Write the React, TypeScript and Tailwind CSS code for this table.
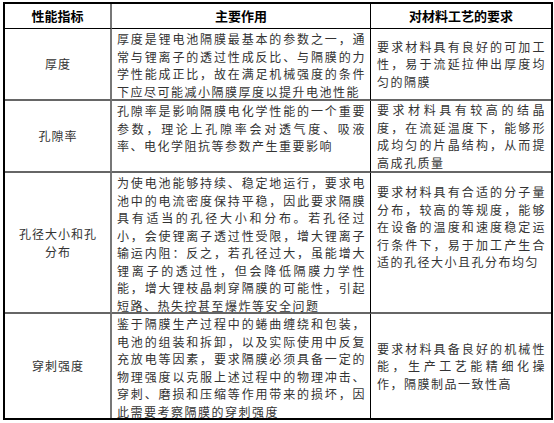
import React from 'react'

type Row = {
  name: string[]
  effect: string[]
  req: string[]
  h: string
  reqAlign: 'center' | 'top'
}

const rows: Row[] = [
  {
    name: ['厚度'],
    effect: [
      '厚度是锂电池隔膜最基本的参数之一，通',
      '常与锂离子的透过性成反比、与隔膜的力',
      '学性能成正比，故在满足机械强度的条件',
      '下应尽可能减小隔膜厚度以提升电池性能',
    ],
    req: ['要求材料具有良好的可加工', '性，易于流延拉伸出厚度均', '匀的隔膜'],
    h: 'h-[72px]',
    reqAlign: 'center',
  },
  {
    name: ['孔隙率'],
    effect: [
      '孔隙率是影响隔膜电化学性能的一个重要',
      '参数，理论上孔隙率会对透气度、吸液',
      '率、电化学阻抗等参数产生重要影响',
    ],
    req: ['要求材料具有较高的结晶', '度，在流延温度下，能够形', '成均匀的片晶结构，从而提', '高成孔质量'],
    h: 'h-[72px]',
    reqAlign: 'center',
  },
  {
    name: ['孔径大小和孔', '分布'],
    effect: [
      '为使电池能够持续、稳定地运行，要求电',
      '池中的电流密度保持平稳，因此要求隔膜',
      '具有适当的孔径大小和分布。若孔径过',
      '小，会使锂离子透过性受限，增大锂离子',
      '输运内阻：反之，若孔径过大，虽能增大',
      '锂离子的透过性，但会降低隔膜力学性',
      '能，增大锂枝晶刺穿隔膜的可能性，引起',
      '短路、热失控甚至爆炸等安全问题',
    ],
    req: [
      '要求材料具有合适的分子量',
      '分布，较高的等规度，能够',
      '在设备的温度和速度稳定运',
      '行条件下，易于加工产生合',
      '适的孔径大小且孔分布均匀',
    ],
    h: 'h-[141px]',
    reqAlign: 'top',
  },
  {
    name: ['穿刺强度'],
    effect: [
      '鉴于隔膜生产过程中的蜷曲缠绕和包装，',
      '电池的组装和拆卸，以及实际使用中反复',
      '充放电等因素，要求隔膜必须具备一定的',
      '物理强度以克服上述过程中的物理冲击、',
      '穿刺、磨损和压缩等作用带来的损坏，因',
      '此需要考察隔膜的穿刺强度',
    ],
    req: ['要求材料具备良好的机械性', '能，生产工艺能精细化操', '作，隔膜制品一致性高'],
    h: 'h-[104px]',
    reqAlign: 'center',
  },
]

function Lines({ lines }: { lines: string[] }) {
  return (
    <>
      {lines.map((l, i) => (
        <div
          key={i}
          className={`h-[17.5px] whitespace-nowrap leading-[17.5px] ${
            i < lines.length - 1 ? 'text-justify [text-align-last:justify]' : 'text-left'
          }`}
        >
          {l}
        </div>
      ))}
    </>
  )
}

export default function App() {
  return (
    <div className="h-[423px] w-[554px] bg-white pl-[3px] pt-[2px] font-['Noto_Sans_CJK_SC',sans-serif] text-[12px] leading-[17.5px] tracking-[1.5px] text-[#333]">
      <div className="grid w-[550px] grid-cols-[107px_259px_180px] border-2 border-black">
        {/* Header */}
        <div className="flex h-[25px] items-center justify-center border-r-2 border-b border-r-[#777] border-b-black text-[13px] font-bold tracking-normal text-black">
          性能指标
        </div>
        <div className="flex h-[25px] items-center justify-center border-r border-b border-black text-[13px] font-bold tracking-normal text-black">
          主要作用
        </div>
        <div className="flex h-[25px] items-center justify-center border-b border-black text-[13px] font-bold tracking-normal text-black">
          对材料工艺的要求
        </div>

        {rows.map((r, i) => {
          const last = i === rows.length - 1
          const bb = last ? '' : 'border-b-2 border-b-[#666]'
          return (
            <React.Fragment key={i}>
              <div
                className={`flex ${r.h} flex-col items-center justify-center border-r-2 border-r-[#777] pl-[1px] tracking-[1px] ${bb}`}
              >
                {r.name.map((n, j) => (
                  <div key={j} className="h-[17.5px] leading-[17.5px]">
                    {n}
                  </div>
                ))}
              </div>
              <div className={`${r.h} border-r border-r-black pt-[1px] pr-[4px] pl-[5px] ${bb}`}>
                <Lines lines={r.effect} />
              </div>
              <div
                className={`flex ${r.h} flex-col pr-[5px] pl-[6px] ${
                  r.reqAlign === 'center' ? 'justify-center' : 'justify-start pt-[10px]'
                } ${bb}`}
              >
                <Lines lines={r.req} />
              </div>
            </React.Fragment>
          )
        })}
      </div>
    </div>
  )
}
